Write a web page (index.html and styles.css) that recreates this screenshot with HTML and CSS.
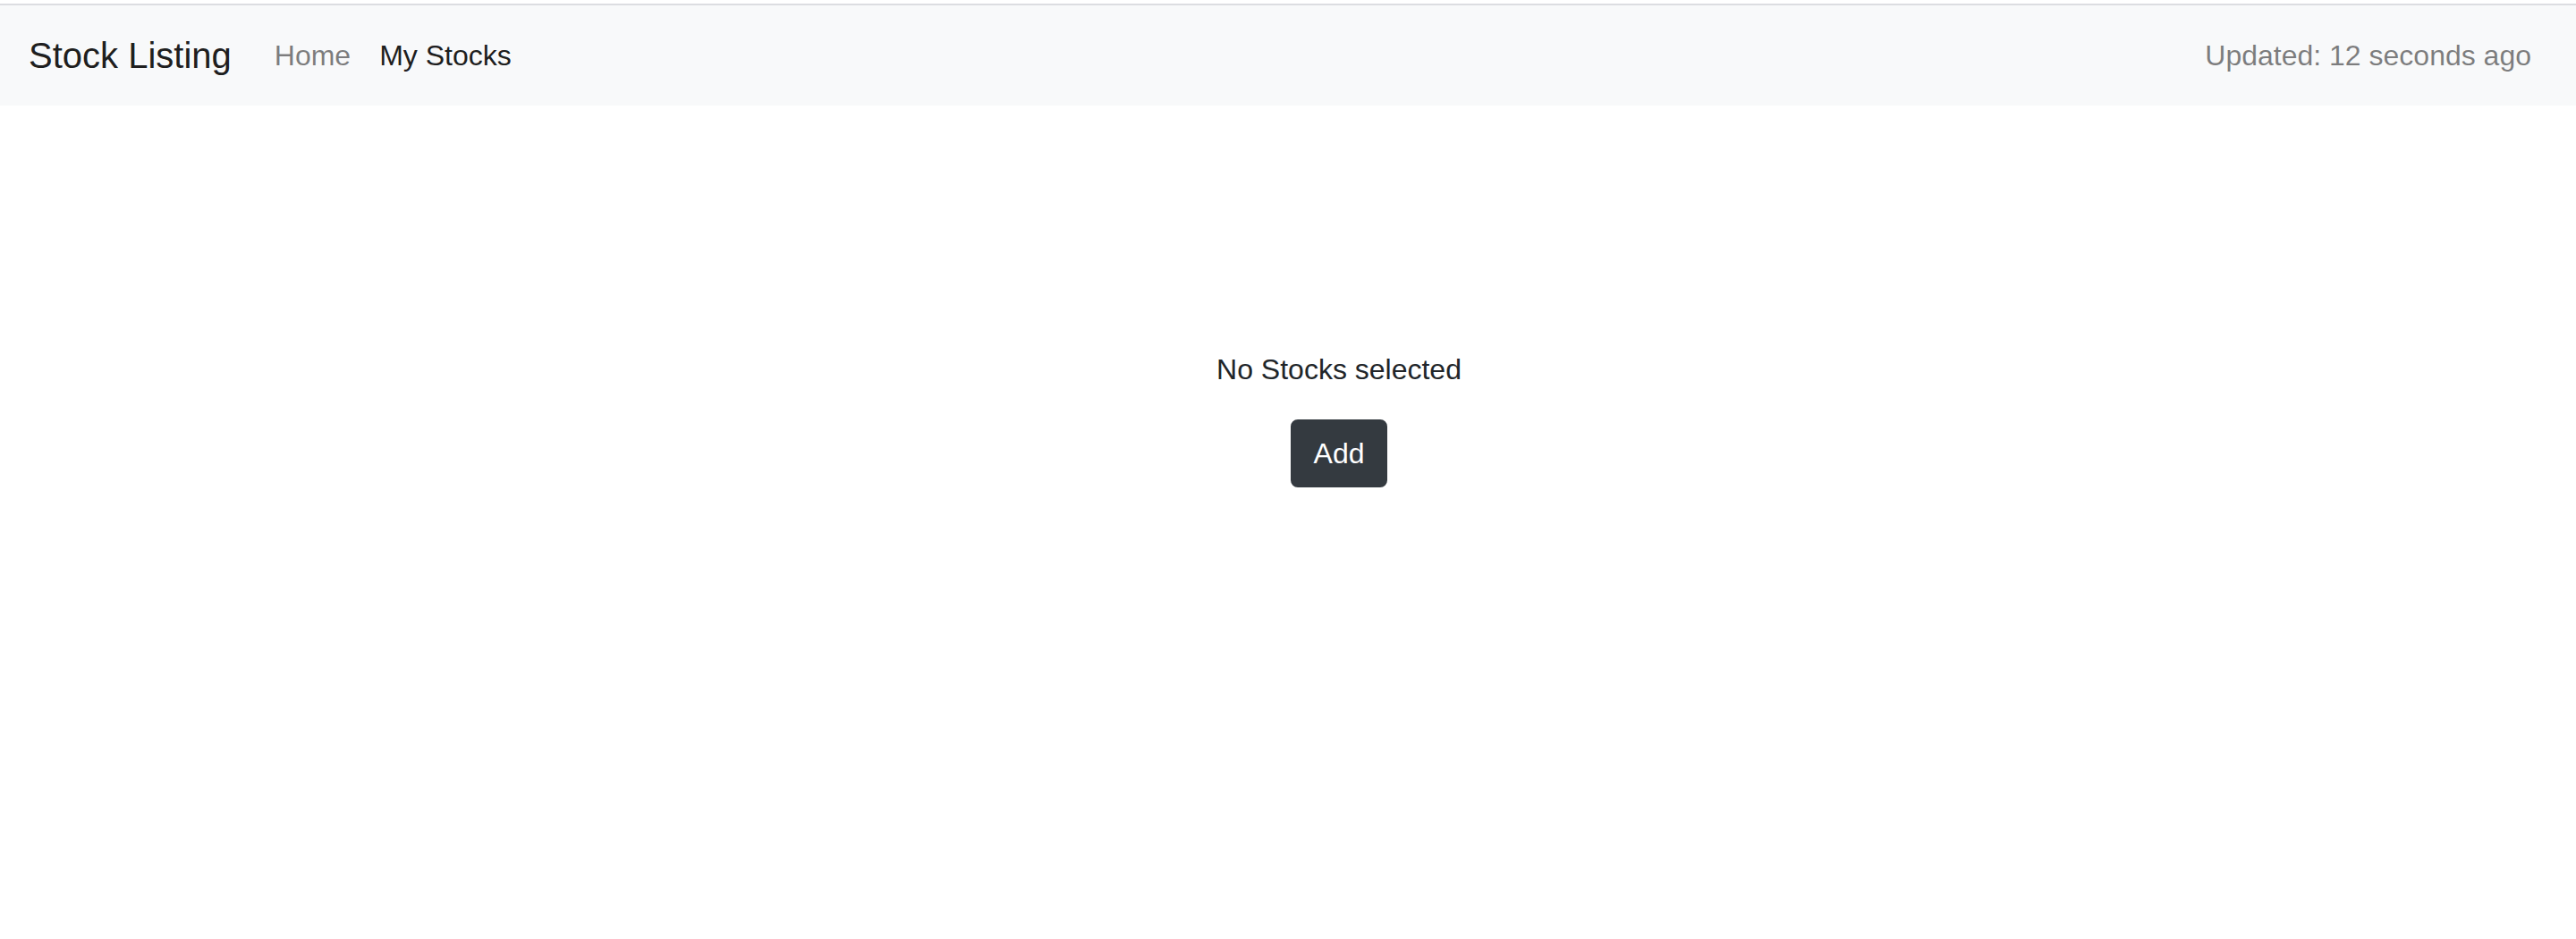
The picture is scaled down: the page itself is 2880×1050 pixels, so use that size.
FILE: index.html
```html
<!DOCTYPE html>
<html lang="en">
<head>
<meta charset="utf-8">
<title>Stock Listing</title>
<link rel="stylesheet" href="styles.css">
</head>
<body>
<div class="topline"></div>
<nav class="navbar">
  <a class="brand" href="#">Stock Listing</a>
  <ul class="nav">
    <li><a class="nav-link" href="#">Home</a></li>
    <li><a class="nav-link active" href="#">My Stocks</a></li>
  </ul>
  <span class="navbar-text">Updated: 12 seconds ago</span>
</nav>
<main class="main">
  <p class="empty">No Stocks selected</p>
  <button class="btn" type="button">Add</button>
</main>
</body>
</html>
```

FILE: styles.css
```css
* { box-sizing: border-box; }
html, body { margin: 0; padding: 0; }
body {
  font-family: "Liberation Sans", Arial, Helvetica, sans-serif;
  font-size: 32px;
  line-height: 1.5;
  color: #212529;
  background: #fff;
  padding-top: 4px;
}
.topline {
  height: 2px;
  background: #dcdde1;
}
.navbar {
  display: flex;
  align-items: center;
  background: #f8f9fa;
  padding: 16px 50px 16px 32px;
  height: 112px;
}
.brand {
  font-size: 40px;
  line-height: 60px;
  padding: 10px 0 10px;
  margin-right: 32px;
  color: rgba(0, 0, 0, 0.9);
  text-decoration: none;
  white-space: nowrap;
}
.nav {
  display: flex;
  list-style: none;
  margin: 0;
  padding: 0;
  flex: 1;
}
.nav-link {
  display: block;
  padding: 16px 16px 16px;
  color: rgba(0, 0, 0, 0.5);
  text-decoration: none;
}
.nav-link.active { color: rgba(0, 0, 0, 0.9); }
.navbar-text {
  color: rgba(0, 0, 0, 0.5);
  padding: 16px 0 16px;
}
.main {
  display: flex;
  flex-direction: column;
  align-items: center;
  padding-top: 271px;
  padding-left: 114px;
}
.empty {
  margin: 0 0 32px;
}
.btn {
  font-family: inherit;
  font-size: 32px;
  line-height: 48px;
  color: #fff;
  background: #343a40;
  border: 2px solid #343a40;
  border-radius: 8px;
  padding: 12px 24px;
  cursor: pointer;
}
```
